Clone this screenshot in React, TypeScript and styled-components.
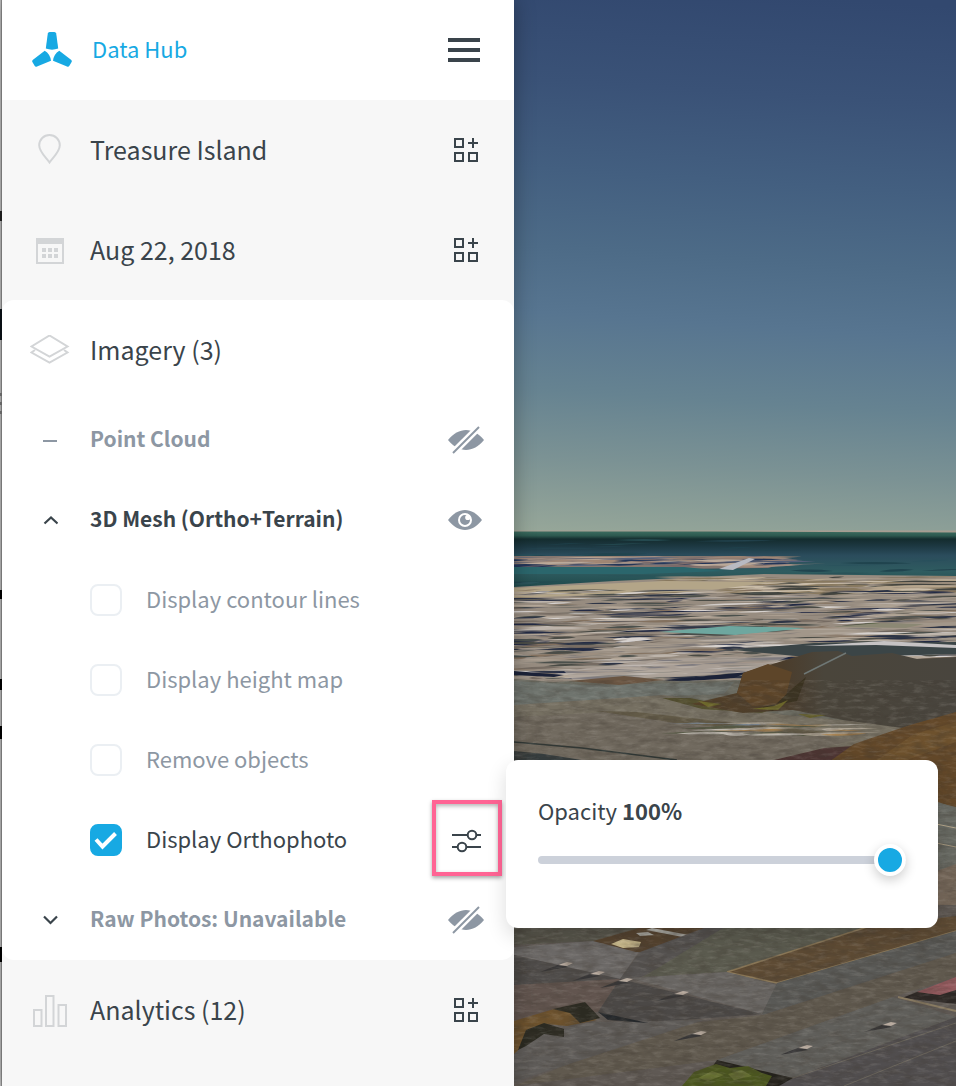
import React, { useState } from "react";
import styled, { createGlobalStyle } from "styled-components";

const color = {
  ink: "#3a444b",
  muted: "#8d97a3",
  faint: "#d3d5d7",
  blue: "#17a9e3",
  pink: "#ff6494",
  panel: "#f7f7f7",
  track: "#ccd1da",
  line: "#ebeff3",
};

const GlobalStyle = createGlobalStyle`
  *, *::before, *::after { box-sizing: border-box; }
  body {
    margin: 0;
    font-family: "Noto Sans CJK SC", "Noto Sans", sans-serif;
    color: ${color.ink};
  }
  button { font: inherit; color: inherit; background: none; border: 0; padding: 0; cursor: pointer; }
  svg { display: block; }
`;

const Page = styled.div`
  display: flex;
  min-height: 100vh;
  overflow: hidden;
`;

/* Sliver of the page that sits behind the panel */
const BackdropEdge = styled.div`
  flex: 0 0 2px;
  background:
    linear-gradient(#0b1218 0 0) 0 309px / 2px 31px no-repeat,
    linear-gradient(#222 0 0) 0 211px / 2px 10px no-repeat,
    linear-gradient(#000 0 0) 0 590px / 2px 9px no-repeat,
    linear-gradient(#000 0 0) 0 679px / 2px 11px no-repeat,
    linear-gradient(#000 0 0) 0 726px / 2px 13px no-repeat,
    linear-gradient(#000 0 0) 0 947px / 2px 15px no-repeat,
    linear-gradient(#777 0 0) 0 393px / 2px 3px no-repeat,
    linear-gradient(#777 0 0) 0 402px / 2px 3px no-repeat,
    linear-gradient(#777 0 0) 0 411px / 2px 3px no-repeat,
    linear-gradient(90deg, #bcbcbc 50%, #8c8c8c 50%);
`;

const Sidebar = styled.aside`
  position: relative;
  z-index: 1;
  flex: 0 0 512px;
  background: ${color.panel};
  box-shadow: 0 0 20px rgba(0, 0, 0, 0.3);
`;

const Header = styled.header`
  display: flex;
  align-items: center;
  justify-content: space-between;
  height: 100px;
  padding: 0 34px 0 30px;
  background: #fff;
`;

const Brand = styled.a`
  display: flex;
  align-items: center;
  gap: 20px;
  font-size: 22px;
  line-height: 32px;
  color: ${color.blue};
  text-decoration: none;
`;

const Row = styled.div<{ $tall?: boolean }>`
  position: relative;
  display: grid;
  grid-template-columns: 80px 1fr 96px;
  align-items: center;
  justify-items: center;
  height: ${(p) => (p.$tall ? 100 : 80)}px;
  padding-left: 8px;
`;

const SectionTitle = styled.h2`
  justify-self: start;
  margin: 0;
  padding-bottom: 2px;
  font-size: 25px;
  font-weight: 400;
  line-height: 40px;
  white-space: nowrap;
`;

const LayerTitle = styled.h3<{ $muted?: boolean }>`
  justify-self: start;
  margin: 0;
  padding-bottom: 4px;
  font-size: 21px;
  font-weight: 700;
  line-height: 32px;
  white-space: nowrap;
  color: ${(p) => (p.$muted ? color.muted : color.ink)};
`;

const Caption = styled.span`
  padding-bottom: 4px;
`;

const Card = styled.section`
  background: #fff;
  border-radius: 12px;
`;

const OptionLabel = styled.label<{ $on: boolean }>`
  grid-column: 2;
  justify-self: start;
  display: flex;
  align-items: center;
  gap: 24px;
  font-size: 22px;
  line-height: 32px;
  white-space: nowrap;
  color: ${(p) => (p.$on ? color.ink : color.muted)};
  cursor: pointer;
`;

const TickBox = styled.span`
  display: grid;
  place-items: center;
  & > * { grid-area: 1 / 1; }
  & > svg { pointer-events: none; }
`;

const TickInput = styled.input`
  appearance: none;
  width: 32px;
  height: 32px;
  margin: 0;
  border: 2px solid ${color.line};
  border-radius: 8px;
  background: #fff;
  &:checked { background: ${color.blue}; border-color: ${color.blue}; }
`;

const IconButton = styled.button`
  display: grid;
  place-items: center;
`;

const HighlightedButton = styled(IconButton)`
  align-self: start;
  justify-self: end;
  width: 70px;
  height: 76px;
  margin-right: 12px;
  padding-top: 6px;
  border: 4px solid ${color.pink};
  box-shadow: 0 2px 4px rgba(0, 0, 0, 0.35), inset 0 2px 4px rgba(0, 0, 0, 0.3);
`;

const Popover = styled.div`
  position: absolute;
  left: 504px;
  top: -40px;
  display: flex;
  flex-direction: column;
  gap: 16px;
  width: 432px;
  padding: 32px 32px 52px;
  background: #fff;
  border-radius: 12px;
  box-shadow: 0 8px 20px rgba(0, 0, 0, 0.14);
`;

const PopoverLabel = styled.label`
  font-size: 22px;
  line-height: 36px;
`;

const Slider = styled.input`
  appearance: none;
  width: 100%;
  height: 32px;
  margin: 0;
  background: none;
  &::-webkit-slider-runnable-track {
    height: 8px;
    border-radius: 4px;
    background: ${color.track};
  }
  &::-webkit-slider-thumb {
    appearance: none;
    width: 32px;
    height: 32px;
    margin-top: -12px;
    border: 4px solid #fff;
    border-radius: 50%;
    background: ${color.blue};
    box-shadow: 0 4px 12px rgba(0, 0, 0, 0.2);
  }
`;

const Viewport = styled.main`
  position: relative;
  flex: 1 1 0;
  min-width: 0;
  background: #55524d;
`;

const SceneSvg = styled.svg`
  position: absolute;
  inset: 0;
  width: 100%;
  height: 100%;
`;

/* ---------- icons ---------- */

const Logo = () => (
  <svg width="40" height="36" viewBox="0 0 40 36" fill={color.blue} aria-hidden="true">
    <path d="M17.600 0h4.800q1.500 0 1.800 1.500l2 15Q20 18.800 13.800 16.500l2-15Q16.100 0 17.600 0z" />
    <path d="M12.700 18.700Q18.200 22 19 28.700L5 34.400Q3.500 35.100 2.600 33.800L.4 29.900Q-.3 28.600 1 27.700z" />
    <path d="M27.300 18.700Q21.800 22 21 28.700L35 34.400Q36.500 35.100 37.400 33.800L39.600 29.900Q40.300 28.600 39 27.700z" />
  </svg>
);

const MenuIcon = () => (
  <svg width="32" height="24" viewBox="0 0 32 24" fill={color.ink} aria-hidden="true">
    <path d="M0 0h32v4H0zM0 10h32v4H0zM0 20h32v4H0z" />
  </svg>
);

const GridPlusIcon = () => (
  <svg width="24" height="24" viewBox="0 0 24 24" fill="none" stroke={color.ink} strokeWidth="2" aria-hidden="true">
    <path d="M1 1h8v8H1zM1 15h8v8H1zM15 15h8v8h-8zM19 0v10M14 5h10" />
  </svg>
);

const PinIcon = () => (
  <svg width="24" height="32" viewBox="0 0 24 32" fill="none" stroke={color.faint} strokeWidth="2" aria-hidden="true">
    <path d="M11.500 28.500C8.500 24 1.200 18 1.200 11.300A10.300 10.300 0 0 1 21.800 11.300C21.800 18 14.500 24 11.500 28.500z" />
  </svg>
);

const CalendarIcon = () => (
  <svg width="28" height="28" viewBox="0 -2 28 28" aria-hidden="true">
    <path d="M1 1h26v24H1z" fill="none" stroke={color.faint} strokeWidth="2" />
    <path d="M0 0h28v6H0zM6 10h4v4H6zM12 10h4v4h-4zM18 10h4v4h-4zM6 16h4v4H6zM12 16h4v4h-4zM18 16h4v4h-4z" fill={color.faint} />
  </svg>
);

const LayersIcon = () => (
  <svg width="40" height="30" viewBox="0 1 40 30" fill="none" stroke={color.faint} strokeWidth="2" aria-hidden="true">
    <path d="M19.500 1.500L37.500 12.500 19.500 22.500 1.500 12.500z" />
    <path d="M5 16L1.500 18.500l18 10 18-10L34 16" />
  </svg>
);

const ChartIcon = () => (
  <svg width="34" height="34" viewBox="0 -2 34 34" fill="none" stroke={color.faint} strokeWidth="2" aria-hidden="true">
    <path d="M1 15h7.500v16H1zM13 1h7.500v30H13zM25.500 10H33v21h-7.500z" />
  </svg>
);

const DashIcon = () => (
  <svg width="14" height="14" viewBox="0 0 14 14" stroke={color.muted} strokeWidth="2" aria-hidden="true">
    <path d="M0 8h14" />
  </svg>
);

const Chevron = ({ up }: { up?: boolean }) => (
  <svg width="16" height="10" viewBox="0 0 16 10" fill="none" stroke={color.ink} strokeWidth="2.200" aria-hidden="true">
    <path d={up ? "M2.500 8.500L9 2.500l6.500 6" : "M2 1.500L8.500 8 15 1.500"} />
  </svg>
);

const EyeIcon = () => (
  <svg width="36" height="20" viewBox="0 0 36 20" aria-hidden="true">
    <path d="M0 10C5 3.500 11 0 17 0s12 3.500 17 10c-5 6.500-11 10-17 10S5 16.500 0 10z" fill={color.muted} />
    <circle cx="17" cy="10" r="6" fill="none" stroke="#fff" strokeWidth="2" />
    <circle cx="19.800" cy="7.400" r="2.600" fill="#fff" />
  </svg>
);

const EyeOffIcon = () => (
  <svg width="36" height="28" viewBox="0 0 36 28" aria-hidden="true">
    <path d="M0 14C5 7.500 12 4 18 4s13 3.500 18 10c-5 6.500-12 10-18 10S5 20.500 0 14z" fill={color.muted} />
    <path d="M3 29L33-1" stroke="#fff" strokeWidth="7" />
    <path d="M5 27L31 1" stroke={color.muted} strokeWidth="2" />
  </svg>
);

const SlidersIcon = () => (
  <svg width="30" height="24" viewBox="0 0 30 24" fill="none" stroke={color.ink} strokeWidth="2" aria-hidden="true">
    <path d="M0 6h15.500M24.500 6H29M0 18h5.500M14.500 18H29" />
    <circle cx="20" cy="6" r="4.300" />
    <circle cx="10" cy="18" r="4.300" />
  </svg>
);

const TickIcon = () => (
  <svg width="32" height="32" viewBox="0 0 32 32" fill="none" stroke="#fff" strokeWidth="4" aria-hidden="true">
    <path d="M6 15.500L12.500 22.500 25.500 9.500" />
  </svg>
);

/* ---------- 3D scene ---------- */

const seeded = (seed: number) => () => {
  seed = (seed * 16807) % 2147483647;
  return seed / 2147483647;
};

type Streak = { x: number; y: number; w: number; h: number; fill: string; tilt: number };

const makeStreaks = (
  count: number, top: number, bottom: number, left: number, right: number,
  palette: string[], seed: number,
): Streak[] => {
  const next = seeded(seed);
  return Array.from({ length: count }, () => {
    const depth = next();
    return {
      x: left + next() * (right - left),
      y: top + depth * (bottom - top),
      w: 16 + next() * 70,
      h: 0.4 + next() * (0.7 + depth * 1.2),
      fill: palette[Math.floor(next() * palette.length)],
      tilt: next() * 2.4 - 2,
    };
  });
};

const Streaks = ({ items }: { items: Streak[] }) => (
  <>
    {items.map((s, i) => (
      <path
        key={i}
        fill={s.fill}
        d={`M${s.x - s.w / 2} ${s.y - s.tilt / 2}Q${s.x} ${s.y - s.h * 1.6} ${s.x + s.w / 2} ${s.y + s.tilt / 2}Q${s.x} ${s.y + s.h * 1.6} ${s.x - s.w / 2} ${s.y - s.tilt / 2}z`}
      />
    ))}
  </>
);

const city = makeStreaks(760, 590, 678, -10, 450,
  ["#bdb4ab", "#d6d1ce", "#b3a697", "#222a44", "#2e3546", "#4a4b45", "#83715f", "#766c63", "#a0968b", "#4b504c"], 41);
const farCity = makeStreaks(150, 577, 594, 160, 450, ["#b5a58d", "#c9bca8", "#42443f", "#88795f", "#9b8d7d"], 7);
const island = makeStreaks(110, 557, 566, -10, 270, ["#a38e82", "#bba999", "#233558", "#7b6a6a", "#a08674", "#55607a"], 19);
const waves = makeStreaks(40, 540, 584, 0, 450, ["#22424d", "#28505c", "#2a5359", "#20444e"], 63);
const debris = makeStreaks(34, 723, 735, 180, 330, ["#b0a696", "#7c8894", "#a5804f", "#555844", "#bcb7ae"], 11);

const Scene = () => (
  <SceneSvg viewBox="0 0 442 1086" preserveAspectRatio="xMinYMin slice" role="img" aria-label="3D view of Treasure Island">
    <defs>
      <linearGradient id="sky" gradientUnits="userSpaceOnUse" x1="20" y1="-20" x2="-15" y2="531">
        <stop offset="0" stopColor="#32486f" />
        <stop offset="0.180" stopColor="#3a5277" />
        <stop offset="0.340" stopColor="#435f80" />
        <stop offset="0.480" stopColor="#4d6b87" />
        <stop offset="0.600" stopColor="#577590" />
        <stop offset="0.740" stopColor="#668391" />
        <stop offset="0.860" stopColor="#7b9294" />
        <stop offset="1" stopColor="#97a799" />
      </linearGradient>
      <linearGradient id="sea" x1="0" y1="0" x2="0" y2="1">
        <stop offset="0" stopColor="#3d6d60" />
        <stop offset="0.080" stopColor="#2d584f" />
        <stop offset="0.140" stopColor="#142c2e" />
        <stop offset="0.250" stopColor="#1c3740" />
        <stop offset="0.420" stopColor="#2b4c5c" />
        <stop offset="0.700" stopColor="#2f5c60" />
        <stop offset="1" stopColor="#1e4748" />
      </linearGradient>
      <linearGradient id="hill" x1="0" y1="0" x2="1" y2="0">
        <stop offset="0" stopColor="#554128" />
        <stop offset="0.350" stopColor="#4b3d2c" />
        <stop offset="0.500" stopColor="#4a453b" />
        <stop offset="1" stopColor="#49453e" />
      </linearGradient>
      <filter id="grain" x="0" y="0" width="100%" height="100%">
        <feTurbulence type="fractalNoise" baseFrequency="0.060 0.160" numOctaves="4" seed="5" />
        <feColorMatrix values="0 0 0 0 0.050  0 0 0 0 0.040  0 0 0 0 0.030  1.600 0 0 0 -0.600" />
      </filter>
      <filter id="grainLight" x="0" y="0" width="100%" height="100%">
        <feTurbulence type="fractalNoise" baseFrequency="0.080 0.300" numOctaves="4" seed="23" />
        <feColorMatrix values="0 0 0 0 0.900  0 0 0 0 0.860  0 0 0 0 0.800  0 1.800 0 0 -0.850" />
      </filter>
    </defs>

    <rect width="442" height="532" fill="url(#sky)" />
    <rect y="531" width="442" height="58" fill="url(#sea)" />
    <Streaks items={waves} />
    <path d="M0 530.500h442v2L200 531.500H0z" fill="#a79d91" />

    <path d="M0 556h250l34 4-30 8-90 1L0 566z" fill="#85766f" />
    <Streaks items={island} />
    <path d="M0 567h170l40 4-80 3H0z" fill="#2b666c" />
    <path d="M205 569l30-11 6 1-22 11z" fill="#b8bac2" />
    <path d="M0 587l100-6 150-7 192 2v110H0z" fill="#978c80" />
    <Streaks items={farCity} />
    <path d="M0 588l150-7 110 1-70 9L0 598z" fill="#b3a588" />
    <Streaks items={city} />
    <path d="M145 632l70-6 77 2-70 7z" fill="#6ea79f" />
    <path d="M320 627l40-4 50 1-18 4z" fill="#4b5a38" />
    <path d="M0 661l160-21 230-19 52-2v6l-200 16L0 665z" fill="#a69b8e" opacity="0.700" />
    <path d="M50 671l100-12 130-4-50 18-170 8z" fill="#b0a8a0" opacity="0.650" />
    <path d="M0 671l50 4-10 2-40-2zM150 680l84-8-14 6-60 4z" fill="#1b2238" />
    <path d="M220 650l80-7 142-1v12l-140 4z" fill="#3b4547" />
    <path d="M290 646l80-5 72 4v3l-80-3z" fill="#c6c3c4" />

    <path d="M0 679l40 3 70-4 50 3 68-1 214 0v406H0z" fill="#6b6b61" />
    <path d="M0 681l70 4 150-3-10 12-80 3-130 10z" fill="#6f746e" />
    <path d="M55 681l55-5 40 4-45 5z" fill="#6a5542" />
    <path d="M0 705l150-10 120 20 172 15v40H0z" fill="#767062" />
    <path d="M148 698l28 0 50 10 40-3-18 8-60-4z" fill="#54502f" />
    <path d="M223 693l6-20 69-21 26-1 14 5 40-3 25 6 39-2v60l-46 12-67-9-50-10-50 3-52-9z" fill="url(#hill)" />
    <path d="M229 673l25-9 24 8-8 32-32 2-15-13z" fill="#5d4529" />
    <path d="M290 674l42-21" stroke="#6f7775" strokeWidth="1.500" />
    <path d="M279 688l-18 17 22-4 9-24zM245 708l22-5-8 8z" fill="#3a3220" />
    <path d="M238 709l22-3 14-6-10 10zM184 701l24 3-14 3zM284 714l28 1-16 3z" fill="#6d682b" />
    <path d="M0 717l96-5 140 14 103 14-79 20H0z" fill="#716a5f" />
    <path d="M82 711l40 1 90 10 100 10-10 3-140-12z" fill="#625a47" />
    <Streaks items={debris} />
    <path d="M0 742l68 6 95 12" fill="none" stroke="#2f3735" strokeWidth="1.500" />
    <path d="M0 751l30 3 44 7H0z" fill="#363d3e" />
    <path d="M260 760l50-12 30-2-22 16z" fill="#4d3533" />
    <path d="M312 764l28-20 56-19 46-13v96l-30-10z" fill="#634829" />
    <path d="M360 762l40-28 42-12v20l-60 22z" fill="#72552f" opacity="0.700" />
    <path d="M420 802l22 5v279h-22z" fill="#686a63" />
    <path d="M420 872l22-8v50l-22 10z" fill="#76685a" />
    <path d="M422 824l20 4M422 843l20 4" stroke="#b3a58a" strokeWidth="1" />

    <rect y="905" width="442" height="181" fill="#5f5954" />
    <path d="M0 925h140l-60 16L0 945z" fill="#56544a" />
    <path d="M0 947l79-6 47 9-20 29L0 955z" fill="#6c6967" />
    <path d="M0 955l106 24L0 985z" fill="#4f4c4a" />
    <path d="M0 985l106-6-22 33L0 1022z" fill="#62554f" />
    <path d="M79 941l46-13h70l-53 24-20 0z" fill="#55432f" />
    <path d="M97 944l12-5 18 3-2 5-16 1z" fill="#c9b98c" />
    <path d="M122 933l12-1 6 3-14 1zM138 928l42 8-6 2-42-8z" fill="#a8a7a0" />
    <path d="M126 952l72-27h34l-105 52-21 2z" fill="#555250" />
    <path d="M129 977l80-49h147L213 972z" fill="#5b5b4f" />
    <path d="M213 972l143-46 86-10v15L263 983z" fill="#5e4b34" />
    <path d="M213 972l143-46M213 972l50 11 179-52" fill="none" stroke="#8a7757" strokeWidth="1.500" />
    <path d="M116 978l97-6 50 13-15 29z" fill="#696663" />
    <path d="M106 979l142 35-119 9-45-11z" fill="#4b4846" />
    <path d="M248 1014l15-31 179-52v22l-193 62z" fill="#595956" />
    <path d="M249 1015l193-62v24l-63 20-176 63-203 26 150-60z" fill="#60594e" />
    <path d="M388 998l15-6 39-8v20z" fill="#2c2724" />
    <path d="M403 992l39-15v13l-16 5z" fill="#93595d" />
    <path d="M384 997l58 14" stroke="#8a7c63" strokeWidth="2" />
    <path d="M203 1060l176-63 63 20-163 61z" fill="#605f5b" />
    <path d="M279 1078l163-61v69H255z" fill="#514e4f" />
    <path d="M255 1086l187-63M330 1086l112-45" stroke="#6a655c" strokeWidth="1" />
    <path d="M203 1060l76 18-14 8h-80z" fill="#23211b" />
    <path d="M168 1086l12-14 22-8 14 4 18-2 14 7 10 3-6 10z" fill="#4b561f" />
    <path d="M184 1078l14-7 12 4-16 6zM214 1074l14-4 10 6-18 4z" fill="#667032" />
    <path d="M0 1040l80-18 110-2-190 62z" fill="#5f5c59" />
    <path d="M0 1021l40-12 25 2 18 9-30 6-22-2-31 30z" fill="#6d522d" />
    <path d="M39 1009l32-7 15 16-20 5-10-10zM12 1030l18-7 20 6v8l-20-3-18 12-8 4z" fill="#2b2a21" />
    <path d="M84 1012l50 11-40-3z" fill="#24272a" />
    {[[50, 964], [82, 973], [110, 980], [166, 993], [184, 1033], [290, 1047], [374, 1024]].map(([x, y]) => (
      <g key={x}>
        <path d={`M${x - 24} ${y + 8}l20-8 8 3z`} fill="#373637" />
        <path d={`M${x - 6} ${y + 1}l9-3 6 1-6 3z`} fill="#b9aca0" />
      </g>
    ))}

    <rect y="680" width="442" height="406" filter="url(#grain)" opacity="0.450" />
    <rect y="680" width="442" height="406" filter="url(#grainLight)" opacity="0.160" />
  </SceneSvg>
);

/* ---------- page ---------- */

const optionNames = ["Display contour lines", "Display height map", "Remove objects"];

const Option = ({ name, initial, children }: { name: string; initial: boolean; children?: React.ReactNode }) => {
  const [on, setOn] = useState(initial);
  return (
    <Row>
      <OptionLabel $on={on}>
        <TickBox>
          <TickInput type="checkbox" checked={on} onChange={(e) => setOn(e.target.checked)} />
          {on && <TickIcon />}
        </TickBox>
        <Caption>{name}</Caption>
      </OptionLabel>
      {children}
    </Row>
  );
};

const Section = ({ icon, title, add = true }: { icon: React.ReactNode; title: string; add?: boolean }) => (
  <Row $tall>
    {icon}
    <SectionTitle>{title}</SectionTitle>
    {add && (
      <IconButton aria-label={`Choose ${title}`}>
        <GridPlusIcon />
      </IconButton>
    )}
  </Row>
);

export default function App() {
  const [opacity, setOpacity] = useState(100);
  return (
    <>
      <GlobalStyle />
      <Page>
        <BackdropEdge />
        <Sidebar>
          <Header>
            <Brand href="#">
              <Logo />
              <Caption>Data Hub</Caption>
            </Brand>
            <IconButton aria-label="Menu">
              <MenuIcon />
            </IconButton>
          </Header>
          <Section icon={<PinIcon />} title="Treasure Island" />
          <Section icon={<CalendarIcon />} title="Aug 22, 2018" />
          <Card>
            <Section icon={<LayersIcon />} title="Imagery (3)" add={false} />
            <Row>
              <DashIcon />
              <LayerTitle $muted>Point Cloud</LayerTitle>
              <IconButton aria-label="Show Point Cloud">
                <EyeOffIcon />
              </IconButton>
            </Row>
            <Row>
              <IconButton aria-label="Collapse 3D Mesh">
                <Chevron up />
              </IconButton>
              <LayerTitle>3D Mesh (Ortho+Terrain)</LayerTitle>
              <IconButton aria-label="Hide 3D Mesh">
                <EyeIcon />
              </IconButton>
            </Row>
            {optionNames.map((name) => (
              <Option key={name} name={name} initial={false} />
            ))}
            <Option name="Display Orthophoto" initial>
              <HighlightedButton aria-label="Orthophoto settings">
                <SlidersIcon />
              </HighlightedButton>
              <Popover>
                <PopoverLabel htmlFor="opacity">
                  Opacity <b>{opacity}%</b>
                </PopoverLabel>
                <Slider
                  id="opacity"
                  type="range"
                  min={0}
                  max={100}
                  value={opacity}
                  onChange={(e) => setOpacity(Number(e.target.value))}
                />
              </Popover>
            </Option>
            <Row>
              <IconButton aria-label="Expand Raw Photos">
                <Chevron />
              </IconButton>
              <LayerTitle $muted>Raw Photos: Unavailable</LayerTitle>
              <IconButton aria-label="Show Raw Photos">
                <EyeOffIcon />
              </IconButton>
            </Row>
          </Card>
          <Section icon={<ChartIcon />} title="Analytics (12)" />
        </Sidebar>
        <Viewport>
          <Scene />
        </Viewport>
      </Page>
    </>
  );
}
